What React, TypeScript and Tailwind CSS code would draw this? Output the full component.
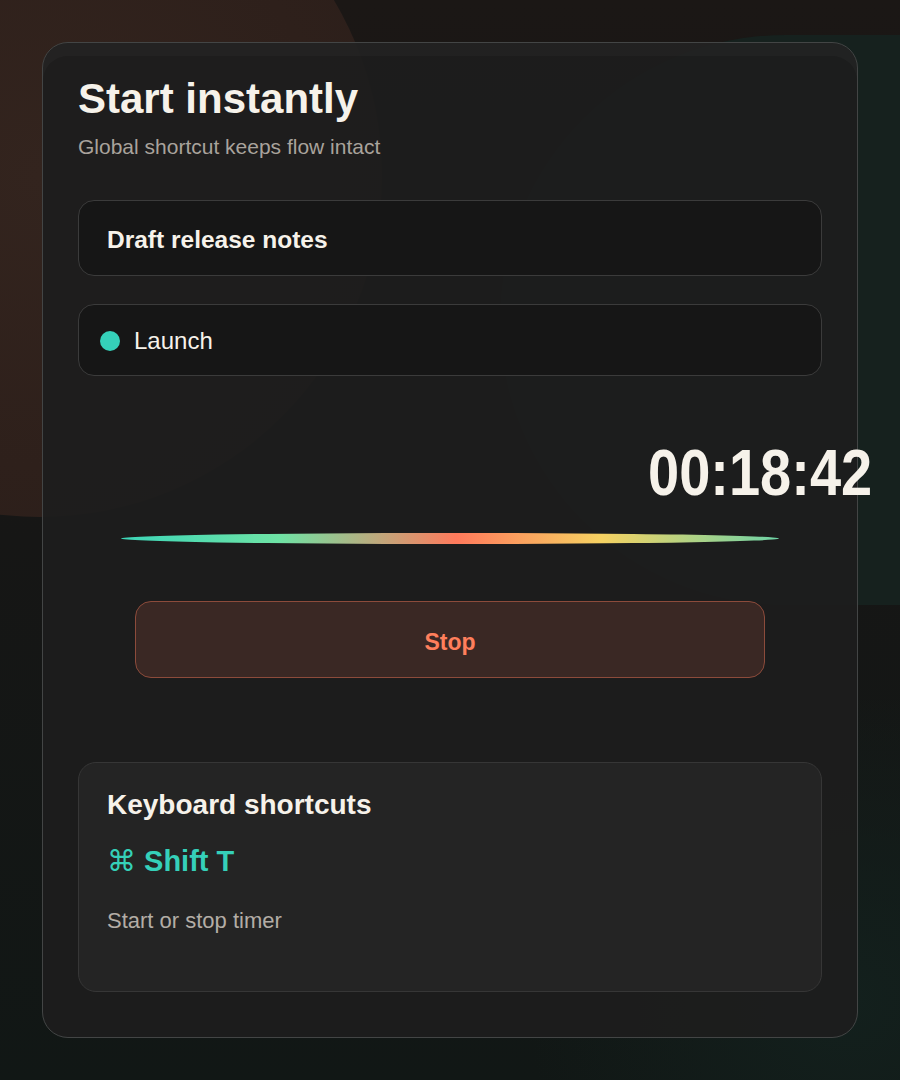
import React from "react";

export default function App() {
  return (
    <div
      className="relative w-[900px] h-[1080px] overflow-hidden bg-[linear-gradient(180deg,#1b1715_0%,#161615_50%,#111715_100%)]"
      style={{ fontFamily: '"Liberation Sans", Arial, sans-serif' }}
    >
      {/* background blobs */}
      <div className="absolute left-[-302px] top-[-167px] w-[684px] h-[684px] rounded-full bg-[radial-gradient(circle_at_50%_50%,#33241e_0%,#2e201b_60%,#2a1e1a_100%)]" />
      <div className="absolute left-[500px] top-[35px] w-[800px] h-[570px] rounded-full bg-[#16211e]" />
      <div className="absolute left-[500px] top-[700px] w-[700px] h-[600px] rounded-full bg-[radial-gradient(circle,#13201d_0%,rgba(17,24,22,0)_70%)]" />

      <div className="relative p-[42px]">
        <div className="rounded-[26px] border border-[#434545] bg-[rgba(29,29,29,0.93)] shadow-[inset_0_13px_0_rgba(255,255,255,0.025)] px-[35px] pt-[31px] pb-[45px] h-[996px]">
          <h1 className="text-[42px] leading-[1.2] font-bold text-[#f6f2ea]">Start instantly</h1>
          <p className="mt-[8px] text-[21px] leading-[1.4] text-[#a9a39c]">Global shortcut keeps flow intact</p>

          <div className="mt-[38px] h-[76px] rounded-[16px] border border-[#3b3b3b] bg-[#161616] flex items-center pl-[28px] pt-[6px]">
            <span className="text-[24.5px] font-bold text-[#f6f2ea]">Draft release notes</span>
          </div>

          <div className="mt-[28px] h-[72px] rounded-[16px] border border-[#3b3b3b] bg-[#161616] flex items-center pl-[21px] gap-[14px] pt-[2px]">
            <span className="w-[20px] h-[20px] rounded-full bg-[#35d0b9]" />
            <span className="text-[24px] text-[#f6f2ea]">Launch</span>
          </div>

          <div className="mt-[65px] flex justify-end mr-[-50px]">
            <span className="inline-block origin-right scale-x-[0.875] text-[64px] leading-none font-bold text-[#f6f2ea]">
              00:18:42
            </span>
          </div>

          <div className="mt-[28px] mx-[43px] h-[11px] rounded-[50%] bg-[linear-gradient(90deg,#3dd6b8_0%,#6ee3a5_24%,#ff7a5c_51%,#f6d262_73%,#6dd3a6_100%)]" />

          <div className="mt-[57px] mx-[57px] h-[77px] rounded-[16px] border-[1.5px] border-[#8c4b3b] bg-[#3a2824] flex items-center justify-center pt-[6px]">
            <span className="text-[23px] font-bold text-[#ff7f5c]">Stop</span>
          </div>

          <div className="mt-[84px] h-[230px] rounded-[18px] border border-[#363636] bg-[#242424] pl-[28px] pt-[25px]">
            <div className="text-[28px] leading-[1.2] font-bold text-[#f6f2ea]">Keyboard shortcuts</div>
            <div className="mt-[23px] text-[29px] leading-[1.2] font-bold text-[#35d0b9]">
              <span className="font-normal">⌘</span> Shift T
            </div>
            <div className="mt-[27px] text-[22px] leading-[1.4] text-[#b3ada6]">Start or stop timer</div>
          </div>
        </div>
      </div>
    </div>
  );
}
